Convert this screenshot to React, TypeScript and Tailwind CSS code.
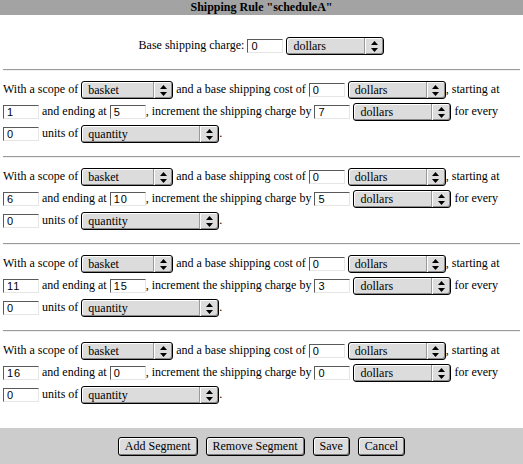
import React from 'react';

type Segment = {
  scope: string;
  baseCost: string;
  start: string;
  end: string;
  increment: string;
  every: string;
};

const segments: Segment[] = [
  { scope: 'basket', baseCost: '0', start: '1', end: '5', increment: '7', every: '0' },
  { scope: 'basket', baseCost: '0', start: '6', end: '10', increment: '5', every: '0' },
  { scope: 'basket', baseCost: '0', start: '11', end: '15', increment: '3', every: '0' },
  { scope: 'basket', baseCost: '0', start: '16', end: '0', increment: '0', every: '0' },
];

const Field: React.FC<{ value: string }> = ({ value }) => (
  <span className="inline-block align-middle text-left w-[36px] h-[14px] bg-white border-t border-l border-t-[#5a5a5a] border-l-[#5a5a5a] border-b border-r border-b-[#e6e6e6] border-r-[#e6e6e6] pl-[3px] text-[11px] leading-[12px] font-['Liberation_Sans',sans-serif] tracking-[1px]">
    {value}
  </span>
);

const Arrows = () => (
  <svg width="7" height="11" viewBox="0 0 7 11" className="block">
    <polygon points="3.5,0 7,4 0,4" fill="#000" />
    <polygon points="0,7 7,7 3.5,11" fill="#000" />
  </svg>
);

const Select: React.FC<{ label: string; width: string }> = ({ label, width }) => (
  <span
    className={`inline-flex align-middle text-left h-[18px] ${width} rounded-[3px] border border-black bg-[#dcdcdc] shadow-[inset_1px_1px_0_#ffffff,inset_-1px_-1px_0_#8a8a8a]`}
  >
    <span className="flex-1 pl-[6px] text-[12px] leading-[16px] text-black truncate">{label}</span>
    <span className="w-[19px] flex items-center justify-center border-l border-l-[#9a9a9a] shadow-[inset_1px_0_0_#ffffff]">
      <Arrows />
    </span>
  </span>
);

const Button: React.FC<{ label: string }> = ({ label }) => (
  <button className="h-[19px] px-[6px] rounded-[3px] border border-black bg-[#dcdcdc] text-[12px] leading-[15px] text-black shadow-[inset_1px_1px_0_#ffffff,inset_-1px_-1px_0_#7a7a7a] font-['Liberation_Serif',serif]">
    {label}
  </button>
);

const Rule = () => (
  <div className="mx-[3px] h-[2px] border-t border-t-[#9a9a9a] border-b border-b-[#f0f0f0]" />
);

const App: React.FC = () => {
  return (
    <div className="min-h-screen flex flex-col bg-white text-black font-['Liberation_Serif',serif] text-[12px]">
      <div className="h-[15px] bg-[#a3a3a3] text-center font-bold text-[12px] leading-[15px]">
        Shipping Rule "scheduleA"
      </div>

      {/* Base charge */}
      <div className="mt-[19px] h-[22px] leading-[22px] text-center whitespace-nowrap">
        Base shipping charge: <Field value="0" /> <Select label="dollars" width="w-[98px]" />
      </div>

      <div className="mt-[13px]">
        {segments.map((seg, i) => (
          <div key={i}>
            <Rule />
            <div className="pt-[7px] pb-[12px] px-[3px] whitespace-nowrap">
              <div className="h-[22px] leading-[22px]">
                With a scope of <Select label={seg.scope} width="w-[92px]" /> and a base shipping cost of{' '}
                <Field value={seg.baseCost} /> <Select label="dollars" width="w-[98px]" />, starting at
              </div>
              <div className="h-[22px] leading-[22px]">
                <Field value={seg.start} /> and ending at <Field value={seg.end} />, increment the shipping charge by{' '}
                <Field value={seg.increment} /> <Select label="dollars" width="w-[98px]" /> for every
              </div>
              <div className="h-[22px] leading-[22px]">
                <Field value={seg.every} /> units of <Select label="quantity" width="w-[138px]" />.
              </div>
            </div>
          </div>
        ))}
      </div>

      <div className="mt-auto h-[36px] bg-[#cccccc] flex items-center justify-center gap-[8px]">
        <Button label="Add Segment" />
        <Button label="Remove Segment" />
        <Button label="Save" />
        <Button label="Cancel" />
      </div>
    </div>
  );
};

export default App;
